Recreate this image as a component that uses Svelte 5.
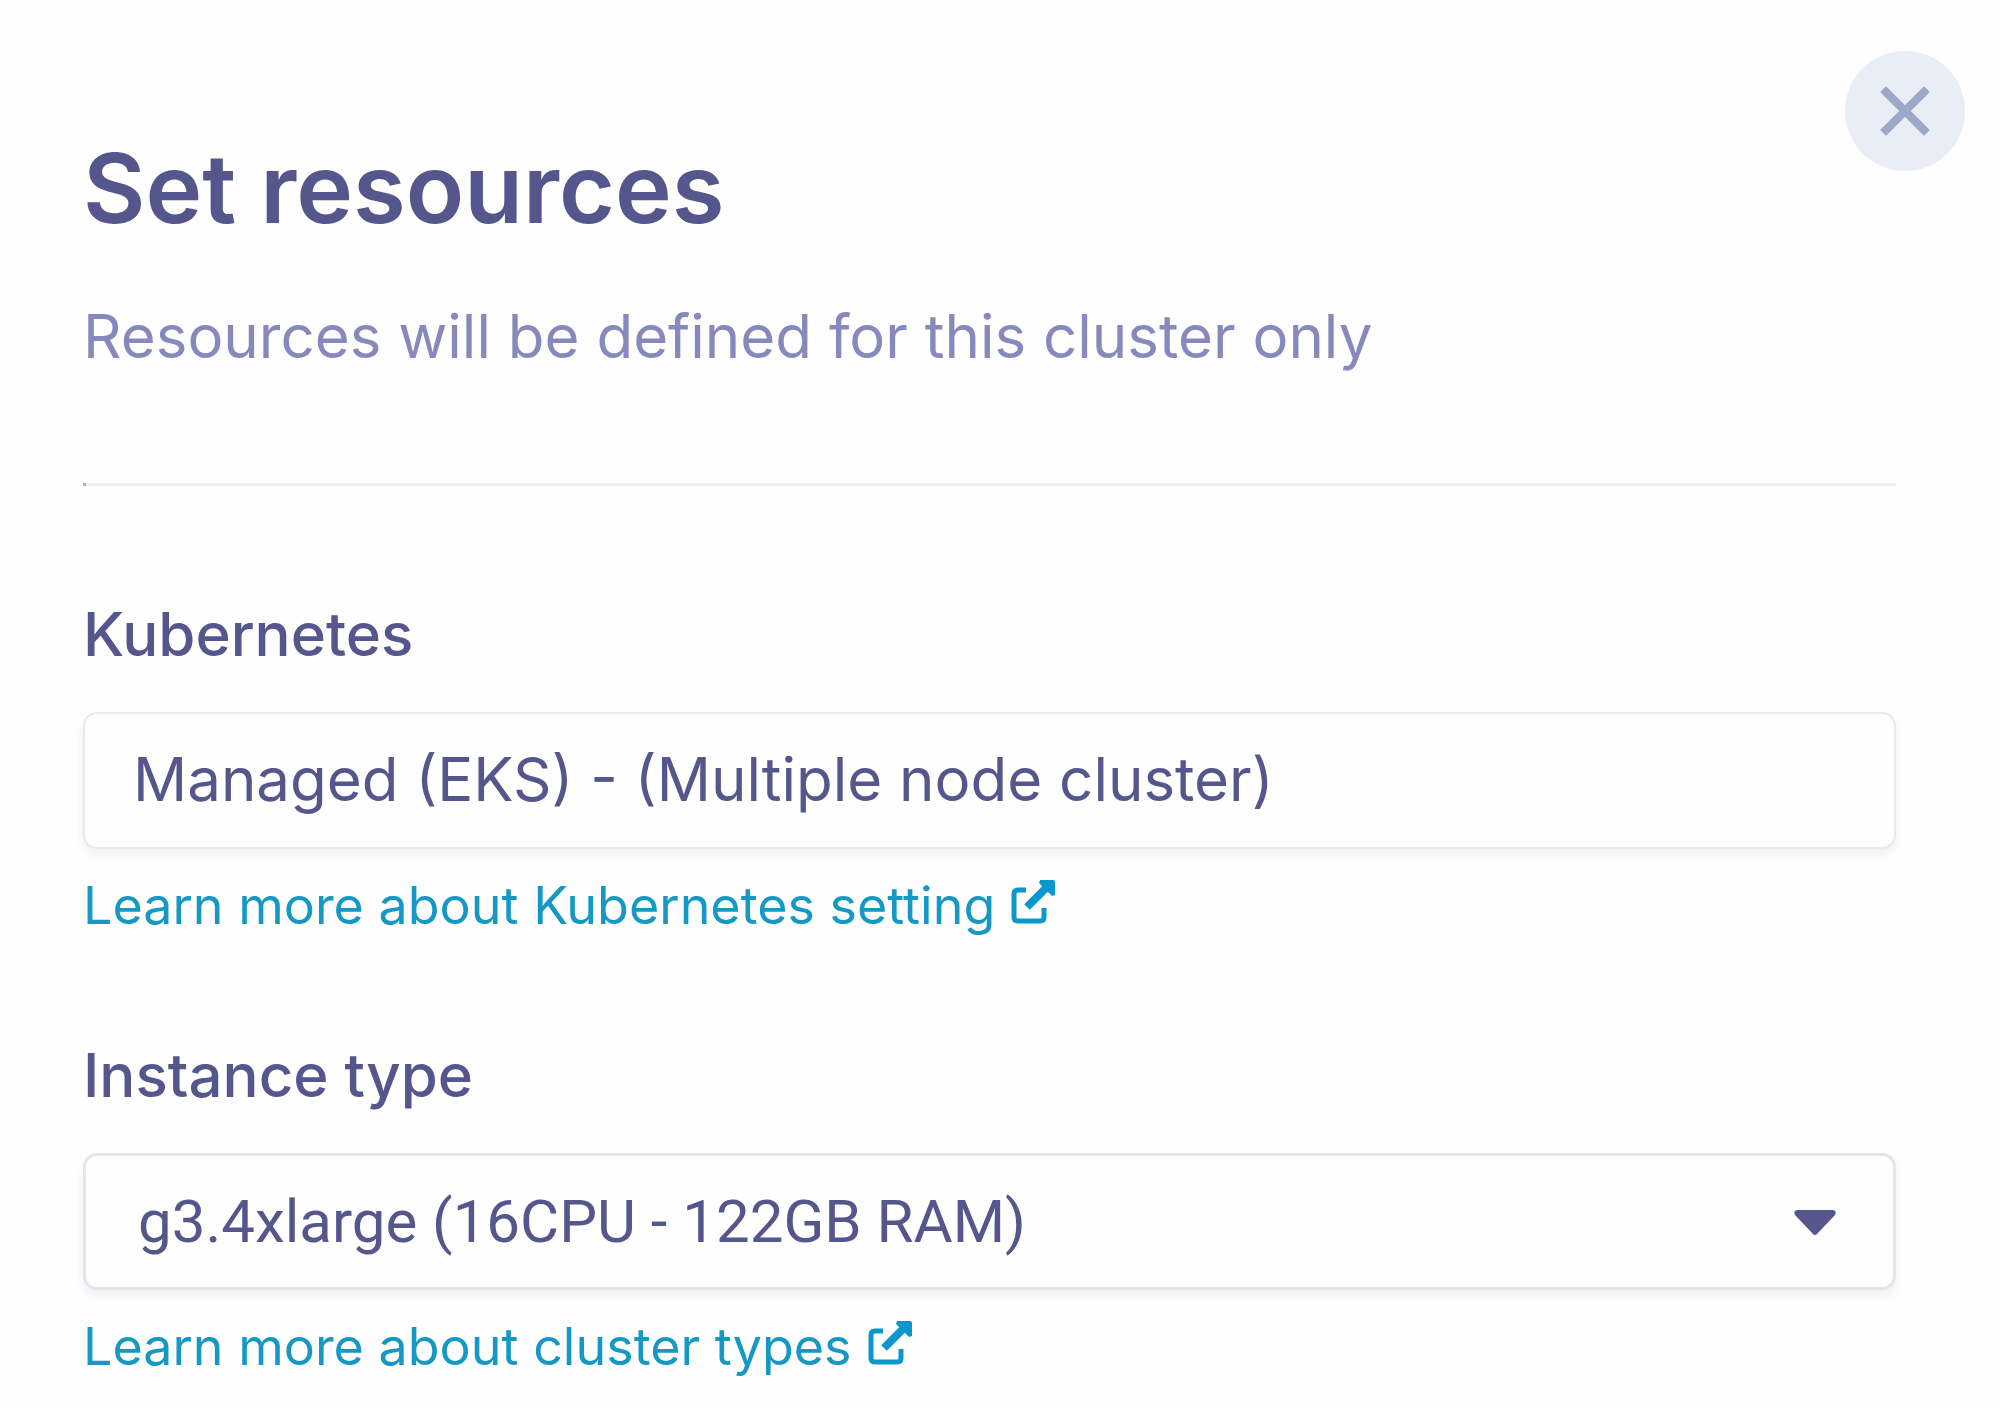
<script>
  let kubernetes = $state('Managed (EKS) - (Multiple node cluster)');
  let instance = $state('g3.4xlarge');
</script>

{#snippet external()}
  <svg class="external" viewBox="0 0 44 44" aria-hidden="true">
    <path d="M15 10H7Q3 10 3 14V37Q3 41 7 41H29Q33 41 33 37V28" fill="none" stroke="currentColor" stroke-width="5" />
    <path d="M16 27L36 7" stroke="currentColor" stroke-width="8" />
    <path d="M29 0H42Q44 0 44 2V15L41 16L28 3Z" fill="currentColor" />
  </svg>
{/snippet}

<main class="dialog">
  <button class="close" type="button" aria-label="Close">
    <svg viewBox="0 0 48 48" aria-hidden="true">
      <path d="M3 3L45 45M45 3L3 45" fill="none" stroke="currentColor" stroke-width="8" />
    </svg>
  </button>

  <header>
    <h1>Set resources</h1>
    <p>Resources will be defined for this cluster only</p>
  </header>

  <hr />

  <form>
    <div class="field">
      <label for="kubernetes">Kubernetes</label>
      <input id="kubernetes" class="control" type="text" readonly bind:value={kubernetes} />
      <a href="#kubernetes">Learn more about Kubernetes setting {@render external()}</a>
    </div>

    <div class="field">
      <label for="instance">Instance type</label>
      <div class="select">
        <select id="instance" class="control" bind:value={instance}>
          <option value="g3.4xlarge">g3.4xlarge (16CPU - 122GB RAM)</option>
        </select>
        <svg class="caret" viewBox="0 0 44 26" aria-hidden="true">
          <path d="M4 0H40Q44 1 42 5L24 24Q22 26 20 24L2 5Q0 1 4 0Z" fill="currentColor" />
        </svg>
      </div>
      <a href="#instance">Learn more about cluster types {@render external()}</a>
    </div>
  </form>
</main>

<style>
  :global(body) {
    margin: 0;
    background: #fefefe;
  }

  .dialog {
    position: relative;
    padding: 128px 104px 32px 83px;
    color: #54568c;
    font-family: Inter, 'Liberation Sans', sans-serif;
  }

  .close {
    position: absolute;
    top: 51px;
    right: 35px;
    display: grid;
    place-items: center;
    width: 120px;
    height: 120px;
    padding: 0;
    border: 0;
    border-radius: 50%;
    background: #e9eef6;
    color: #9ba8c8;
    cursor: pointer;
  }

  .close svg {
    width: 50px;
    height: 50px;
  }

  h1 {
    margin: 0 0 52px;
    font-size: 96px;
    font-weight: 600;
    line-height: 120px;
  }

  p {
    margin: 0;
    color: #8789bd;
    font-size: 60px;
    line-height: 72px;
  }

  hr {
    height: 3px;
    margin: 111px 0 0;
    border: 0;
    background: linear-gradient(to right, #b4b4b8 3px, #efeff1 3px);
  }

  form {
    display: flex;
    flex-direction: column;
    gap: 101px;
    padding-top: 112px;
  }

  .field {
    display: flex;
    flex-direction: column;
    align-items: flex-start;
  }

  label {
    margin-bottom: 42px;
    font-size: 60px;
    font-weight: 500;
    line-height: 72px;
  }

  .control {
    box-sizing: border-box;
    width: 100%;
    height: 137px;
    margin: 0;
    padding: 0 48px 3px;
    border: 2px solid #e9eaee;
    border-radius: 14px;
    outline: 0;
    background: #fefefe;
    box-shadow: 0 6px 8px #f0f0f6;
    color: inherit;
    font-family: inherit;
    font-size: 60px;
  }

  .select {
    position: relative;
    width: 100%;
  }

  select.control {
    display: block;
    border: 3px solid #e2e5e9;
    padding: 0 52px;
    appearance: none;
    font-family: Roboto, 'Liberation Sans', sans-serif;
  }

  .caret {
    position: absolute;
    top: 57px;
    right: 59px;
    width: 44px;
    height: 26px;
    pointer-events: none;
  }

  a {
    display: flex;
    align-items: center;
    gap: 16px;
    margin-top: 25px;
    color: #1598c4;
    font-size: 52px;
    line-height: 64px;
    text-decoration: none;
  }

  .external {
    width: 44px;
    height: 44px;
    margin-bottom: 8px;
    color: #0b97cb;
  }
</style>
